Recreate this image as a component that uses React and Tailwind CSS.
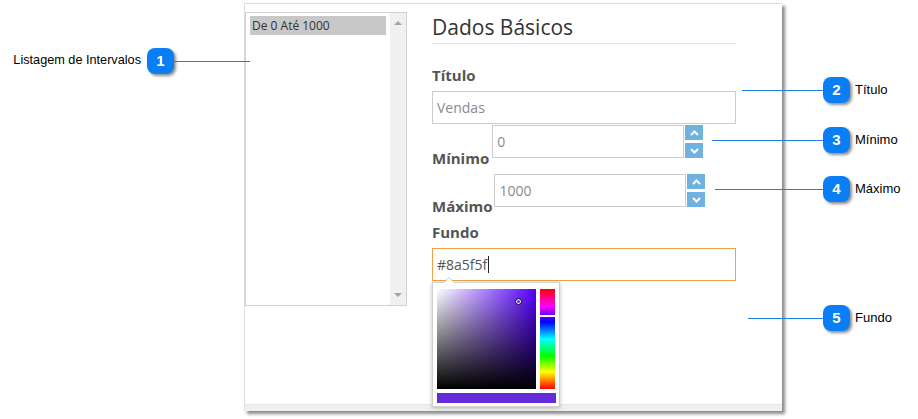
import React from "react";

const Badge = ({ n }) => (
  <div className="flex h-[26px] w-[27px] items-center justify-center rounded-[8px] bg-[#0a7ef5] text-[15px] font-bold text-white shadow-[2px_2px_3px_rgba(0,0,0,0.45)] [font-family:'Liberation_Sans',Arial,sans-serif]">
    {n}
  </div>
);

const Chevron = ({ up }) => (
  <svg width="9" height="6" viewBox="0 0 9 6">
    <polyline
      points={up ? "1,5 4.5,1.5 8,5" : "1,1 4.5,4.5 8,1"}
      fill="none"
      stroke="white"
      strokeWidth="2"
    />
  </svg>
);

const Spinner = ({ value }) => (
  <div className="flex">
    <div className="flex h-[33px] w-[192px] items-center border border-[#cccccc] bg-white pl-[4px] text-[14px] text-[#8a8a8a]">
      {value}
    </div>
    <div className="ml-px flex w-[18px] flex-col justify-between">
      <div className="flex h-[15px] items-center justify-center bg-[#6fb2df]">
        <Chevron up />
      </div>
      <div className="flex h-[15px] items-center justify-center bg-[#6fb2df]">
        <Chevron />
      </div>
    </div>
  </div>
);

const Line = ({ x1, x2, y }) => (
  <div
    className="absolute h-px bg-[#1f7fe0]"
    style={{ left: x1, top: y, width: x2 - x1 }}
  />
);

export default function App() {
  return (
    <div className="relative h-[419px] w-[918px] overflow-hidden bg-white [font-family:'Open_Sans',sans-serif]">
      <div className="flex">
        {/* left annotation */}
        <div className="flex w-[244px] justify-end pr-[70px] pt-[48px]">
          <div className="flex h-[26px] items-center gap-[6px]">
            <span className="text-[12.7px] text-black [font-family:'Liberation_Sans',Arial,sans-serif]">
              Listagem de Intervalos
            </span>
            <Badge n="1" />
          </div>
        </div>

        {/* screenshot panel */}
        <div className="mt-[3px] flex h-[408px] w-[538px] flex-col border-l border-t border-[#dcdcdc] bg-white shadow-[3px_3px_3px_rgba(0,0,0,0.45)]">
          <div className="flex flex-1">
            {/* listbox */}
            <div className="mt-[8px] flex h-[294px] w-[162px] border border-[#d2d2d2]">
              <div className="flex-1 px-[4px] pt-[3px]">
                <div className="flex h-[19px] items-center bg-[#c8c8c8] pl-[2px] text-[12px] text-[#333]">
                  De 0 Até 1000
                </div>
              </div>
              <div className="flex w-[16px] flex-col items-center justify-between bg-[#f0f0f0] pb-[8px] pt-[8px]">
                <div className="h-0 w-0 border-x-[4px] border-b-[4px] border-x-transparent border-b-[#a5a5a5]" />
                <div className="h-0 w-0 border-x-[4px] border-t-[4px] border-x-transparent border-t-[#a5a5a5]" />
              </div>
            </div>

            {/* form */}
            <div className="ml-[25px] mt-[8px] flex w-[304px] flex-col">
              <div className="h-[32px] border-b border-[#e5e5e5] text-[21px] leading-[30px] text-[#333]">
                Dados Básicos
              </div>
              <div className="mt-[21px] text-[15px] font-bold leading-[20px] text-[#555]">
                Título
              </div>
              <div className="mt-[6px] flex h-[33px] items-center border border-[#cccccc] pl-[4px] text-[14px] text-[#8a8a8a]">
                Vendas
              </div>
              <div className="mt-px flex items-start">
                <div className="mt-[23px] text-[15px] font-bold leading-[20px] text-[#555]">
                  Mínimo
                </div>
                <div className="ml-[3px]">
                  <Spinner value="0" />
                </div>
              </div>
              <div className="mt-[6px] flex items-start">
                <div className="mt-[22px] text-[15px] font-bold leading-[20px] text-[#555]">
                  Máximo
                </div>
                <div className="ml-[2px]">
                  <Spinner value="1000" />
                </div>
              </div>
              <div className="mt-[6px] text-[15px] font-bold leading-[20px] text-[#555]">
                Fundo
              </div>
              <div className="relative mt-[6px]">
                <div className="flex h-[33px] items-center border border-[#f0a048] pl-[4px] text-[14px] text-[#555]">
                  #8a5f5f
                  <span className="ml-px inline-block h-[17px] w-px bg-[#222]" />
                </div>

                {/* color picker popover */}
                <div className="absolute left-0 top-full mt-px h-[125px] w-[128px] border border-[#cfcfcf] bg-white p-[4px] shadow-[0_1px_4px_rgba(0,0,0,0.25)]">
                  <div className="absolute -top-[6px] left-[10px] h-0 w-0 border-x-[6px] border-b-[6px] border-x-transparent border-b-[#cfcfcf]" />
                  <div className="absolute -top-[5px] left-[11px] h-0 w-0 border-x-[5px] border-b-[5px] border-x-transparent border-b-white" />
                  <div className="mt-[2px] flex gap-[4px]">
                    <div className="relative h-[100px] w-[100px] bg-[linear-gradient(to_top,#000,rgba(0,0,0,0)),linear-gradient(to_right,#fff,#5500ff)]">
                      <div className="absolute left-[78px] top-[9px] h-[7px] w-[7px] rounded-full border border-[#222] bg-transparent shadow-[inset_0_0_0_1px_#fff]" />
                    </div>
                    <div className="relative h-[100px] w-[15px] bg-[linear-gradient(to_bottom,#ff0000,#ff00ff_17%,#0000ff_33%,#00ffff_50%,#00ff00_67%,#ffff00_83%,#ff0000)]">
                      <div className="absolute left-0 top-[26px] h-[2px] w-full bg-white" />
                    </div>
                  </div>
                  <div className="mt-[4px] h-[10px] w-[119px] bg-[#652ad9]" />
                </div>
              </div>
            </div>
          </div>
          <div className="h-[7px] border-t border-[#e6e6e6] bg-[#f0f0f0]" />
        </div>

        {/* right annotations */}
        <div className="ml-[41px] flex flex-col pt-[77px] text-[13px] text-black [font-family:'Liberation_Sans',Arial,sans-serif]">
          <div className="flex h-[26px] items-center gap-[5px]">
            <Badge n="2" />
            <span>Título</span>
          </div>
          <div className="mt-[24px] flex h-[26px] items-center gap-[5px]">
            <Badge n="3" />
            <span>Mínimo</span>
          </div>
          <div className="mt-[23px] flex h-[26px] items-center gap-[5px]">
            <Badge n="4" />
            <span>Máximo</span>
          </div>
          <div className="mt-[103px] flex h-[26px] items-center gap-[5px]">
            <Badge n="5" />
            <span>Fundo</span>
          </div>
        </div>
      </div>

      {/* connector lines */}
      <Line x1={174} x2={250} y={61} />
      <Line x1={742} x2={823} y={90} />
      <Line x1={712} x2={823} y={140} />
      <Line x1={715} x2={823} y={189} />
      <Line x1={748} x2={823} y={318} />
    </div>
  );
}
